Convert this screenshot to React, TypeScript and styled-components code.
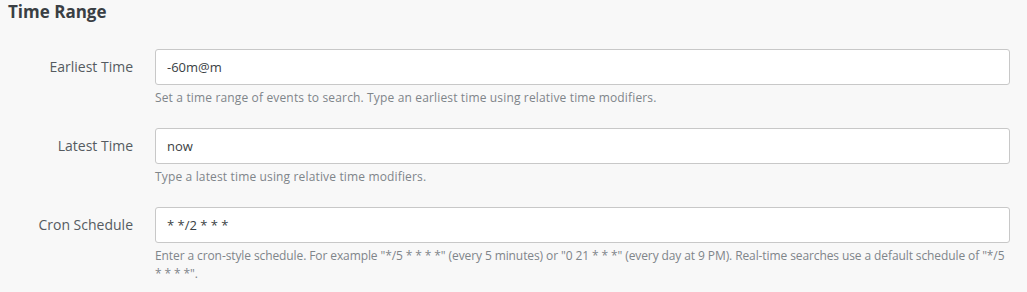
import React from "react";
import styled, { createGlobalStyle } from "styled-components";

const GlobalStyle = createGlobalStyle`
  html, body {
    margin: 0;
    padding: 0;
    background: #f8f8f8;
    font-family: "Open Sans", Lato, Arial, sans-serif;
  }
`;

interface FieldProps {
  label: string;
  value: string;
  help: string;
  tight?: boolean;
}

const fields: FieldProps[] = [
  {
    label: "Earliest Time",
    value: "-60m@m",
    help: "Set a time range of events to search. Type an earliest time using relative time modifiers.",
  },
  {
    label: "Latest Time",
    value: "now",
    help: "Type a latest time using relative time modifiers.",
  },
  {
    label: "Cron Schedule",
    value: "* */2 * * *",
    help: 'Enter a cron-style schedule. For example "*/5 * * * *" (every 5 minutes) or "0 21 * * *" (every day at 9 PM). Real-time searches use a default schedule of "*/5 * * * *".',
    tight: true,
  },
];

const Field = ({ label, value, help, tight }: FieldProps) => {
  return (
    <Row>
      <Label>{label}</Label>
      <Control>
        <Input defaultValue={value} readOnly />
        <Help $tight={tight}>{help}</Help>
      </Control>
    </Row>
  );
};

const App = () => {
  return (
    <Wrapper>
      <GlobalStyle />
      <Heading>Time Range</Heading>
      <Form>
        {fields.map((f) => (
          <Field key={f.label} {...f} />
        ))}
      </Form>
    </Wrapper>
  );
};

export default App;

const Wrapper = styled.div`
  width: 1027px;
  height: 292px;
  overflow: hidden;
  padding: 0 17px 0 8px;
  box-sizing: border-box;
`;

const Heading = styled.h2`
  margin: 0;
  padding-top: 0;
  font-size: 17px;
  font-weight: 700;
  color: #3a3f44;
  line-height: 23px;
`;

const Form = styled.div`
  display: flex;
  flex-direction: column;
  gap: 21px;
  margin-top: 26px;
`;

const Row = styled.div`
  display: grid;
  grid-template-columns: 125px 1fr;
  column-gap: 22px;
  align-items: start;
`;

const Label = styled.div`
  text-align: right;
  font-size: 14px;
  color: #555b61;
  line-height: 36px;
`;

const Control = styled.div`
  display: flex;
  flex-direction: column;
`;

const Input = styled.input`
  height: 36px;
  box-sizing: border-box;
  border: 1px solid #c8c8c8;
  border-radius: 3px;
  background: #fff;
  padding: 0 11px;
  font-family: inherit;
  font-size: 13px;
  color: #3a3f44;
  outline: none;
`;

const Help = styled.div<{ $tight?: boolean }>`
  margin-top: 4px;
  font-size: 12px;
  letter-spacing: ${({ $tight }) => ($tight ? "-0.1px" : "0.15px")};
  line-height: 18px;
  color: #7f858a;
`;
